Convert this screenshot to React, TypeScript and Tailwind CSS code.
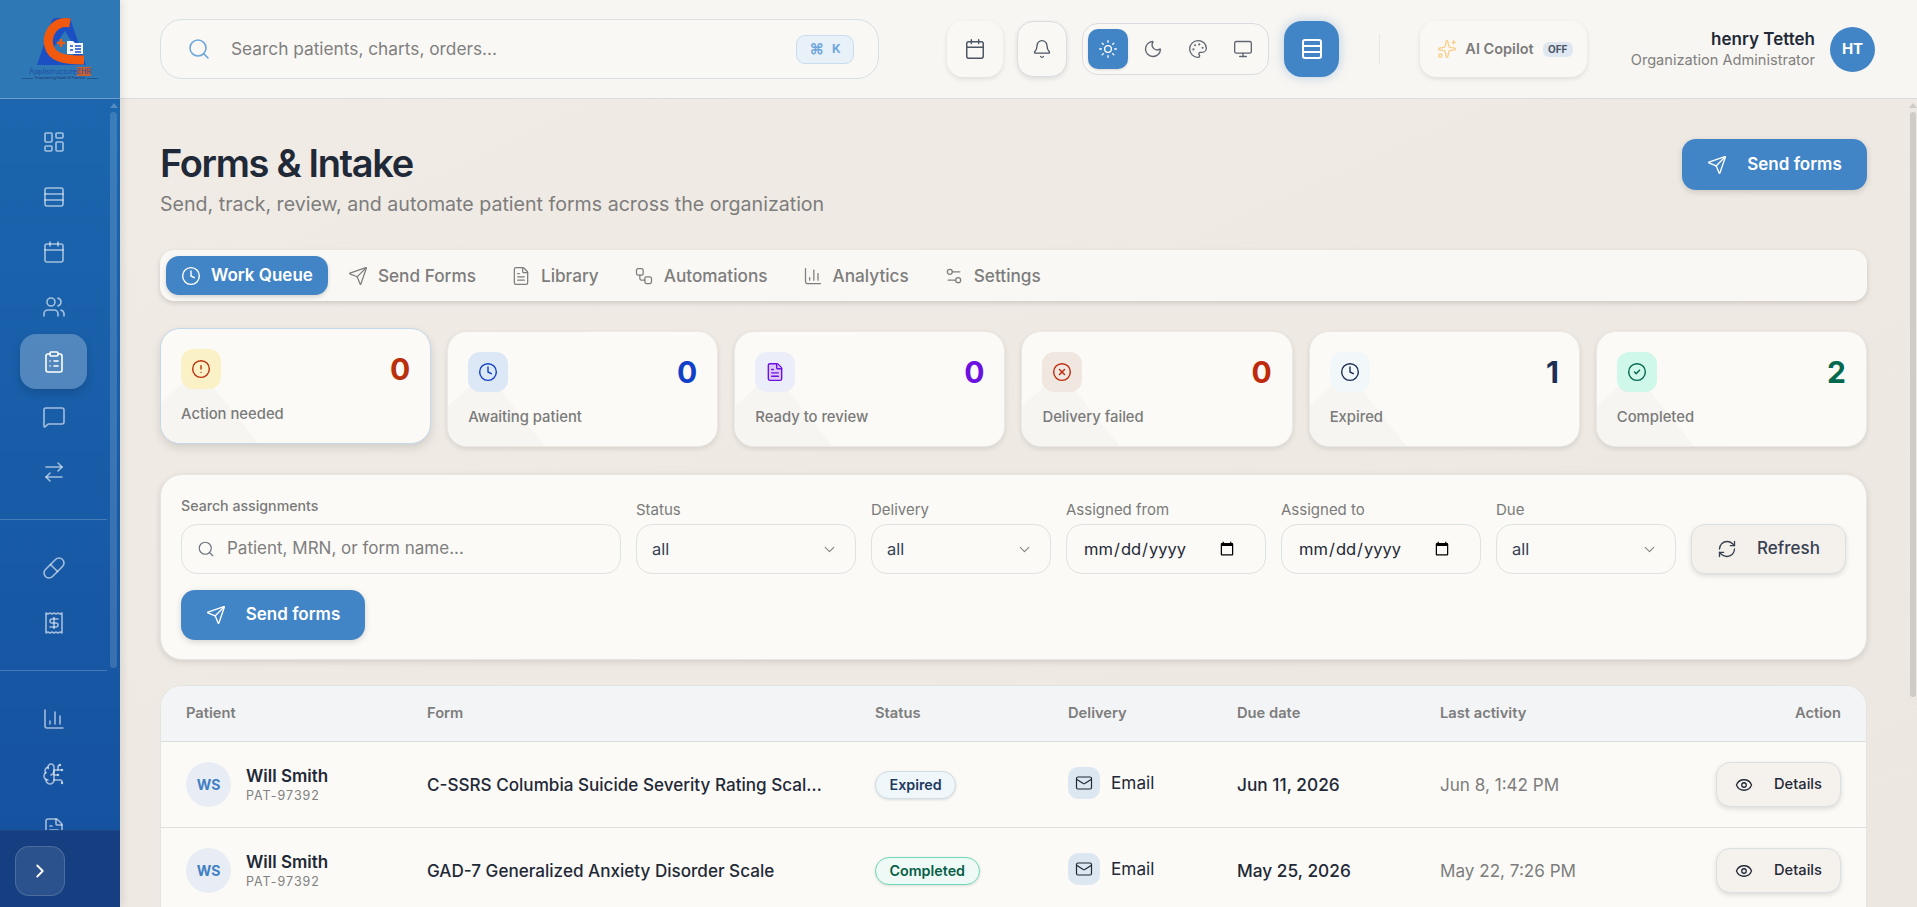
import {
  ArrowRightLeft,
  Bell,
  BrainCircuit,
  Calendar,
  ChartColumn,
  ChevronDown,
  ChevronRight,
  CircleAlert,
  CircleCheck,
  CircleX,
  ClipboardList,
  Clock,
  Eye,
  FileText,
  LayoutDashboard,
  Mail,
  MessageSquare,
  Monitor,
  Moon,
  Palette,
  Pill,
  Receipt,
  RefreshCw,
  Rows3,
  Search,
  Send,
  Settings2,
  Sparkles,
  Sun,
  Users,
  Workflow,
} from "lucide-react";
import type { ReactNode } from "react";

const navGroups = [
  [LayoutDashboard, Rows3, Calendar, Users, ClipboardList, MessageSquare, ArrowRightLeft],
  [Pill, Receipt],
  [ChartColumn, BrainCircuit, FileText],
];

const tabs = [
  { label: "Send Forms", icon: Send },
  { label: "Library", icon: FileText },
  { label: "Automations", icon: Workflow },
  { label: "Analytics", icon: ChartColumn },
  { label: "Settings", icon: Settings2 },
];

const stats = [
  { label: "Action needed", value: 0, icon: CircleAlert, box: "bg-[#fbf1c7]", tone: "text-[#b9300c]", lifted: true },
  { label: "Awaiting patient", value: 0, icon: Clock, box: "bg-[#dce8f5]", tone: "text-[#1140c8]" },
  { label: "Ready to review", value: 0, icon: FileText, box: "bg-[#ebeef8]", tone: "text-[#6d11e0]", fill: "fill-[#dcc8fa]" },
  { label: "Delivery failed", value: 0, icon: CircleX, box: "bg-[#efe7e0]", tone: "text-[#c02a0c]" },
  { label: "Expired", value: 1, icon: Clock, box: "bg-[#f2f7f9]", tone: "text-[#1e2f55]" },
  { label: "Completed", value: 2, icon: CircleCheck, box: "bg-[#cff7ea]", tone: "text-[#04684f]" },
];

const rows = [
  {
    form: "C-SSRS Columbia Suicide Severity Rating Scale (Adult)",
    status: "Expired",
    badge: "bg-[#f0f7fa] border-[#cfdde5] text-[#1e3a5f]",
    due: "Jun 11, 2026",
    activity: "Jun 8, 1:42 PM",
  },
  {
    form: "GAD-7 Generalized Anxiety Disorder Scale",
    status: "Completed",
    badge: "bg-[#effaf6] border-[#6ed9b8] text-[#065f46]",
    due: "May 25, 2026",
    activity: "May 22, 7:26 PM",
  },
];

const tableCols = "grid grid-cols-[241px_448px_193px_169px_203px_200px_1fr] items-center px-[25px]";

const Logo = () => (
  <div className="flex flex-col items-center">
    <svg width="64" height="50" viewBox="-4 0 64 50">
      <path d="M5 48 L20 3 Q21 1 24 1 L38 1 L54 48 Z" fill="#1d4fc4" />
      <path d="M22 30 L33 14 L44 32 L40 40 L26 40 Z" fill="#2f78b6" />
      <path d="M38 6 C22 3 14 18 17 29 C20 40 30 43 52 43" fill="none" stroke="#f1590f" strokeWidth="9" />
      <path d="M25 26 h8 M29 22 v8" stroke="#f1590f" strokeWidth="2.4" />
      <path d="M35 24 h6 l2 2 h8 v11 h-16 Z" fill="#f4f7fb" />
      <path d="M38 29 h3 M38 33 h3 M43 29 h6 M43 32 h6 M43 35 h6" stroke="#1d4fc4" strokeWidth="1.4" />
    </svg>
    <div className="font-['Inter',sans-serif] text-[7.2px] leading-[9px] text-[#1c4ea0] whitespace-nowrap">
      Applistructure<span className="bg-[#f1590f]/80 text-[#1c4ea0]">EHR</span>
    </div>
    <div className="flex items-center gap-[2px] text-[3.5px] leading-[5px] text-[#17336b] whitespace-nowrap font-['Inter',sans-serif]">
      <span className="w-[11px] h-px bg-[#17336b]/50" />
      Empowering Health &amp; Practice
      <span className="w-[11px] h-px bg-[#17336b]/50" />
    </div>
  </div>
);

const ScrollRail = ({ className, thumb, track }: { className: string; thumb: string; track: string }) => (
  <div className={`absolute flex flex-col items-center ${className}`}>
    <span className={`w-0 h-0 border-x-[4px] border-x-transparent border-b-[5px] ${track} mb-[4px]`} />
    <div className={`flex-1 w-full ${thumb}`} />
  </div>
);

const Sidebar = () => (
  <aside className="relative w-[120px] h-full shrink-0 flex flex-col bg-gradient-to-b from-[#1c69b0] to-[#15509e] shadow-[2px_0_8px_rgba(0,0,0,0.1)] z-10">
    <div className="h-[99px] shrink-0 flex items-center justify-center bg-[#2f78b6] border-b border-[#6c9dc9]">
      <Logo />
    </div>
    <nav className="flex-1 overflow-hidden pt-[15px] w-[107px]">
      {navGroups.map((group, i) => (
        <div key={i} className={i > 0 ? "mt-[20px] pt-[20px] border-t border-white/20" : ""}>
          {group.map((Icon, j) => {
            const active = i === 0 && j === 4;
            return (
              <div
                key={j}
                className={`mx-[20px] h-[55px] flex items-center justify-center rounded-[16px] ${
                  active ? "bg-white/25 text-white shadow-[0_4px_8px_rgba(0,0,0,0.15)]" : "text-white/60"
                }`}
              >
                <Icon size={24} strokeWidth={1.6} />
              </div>
            );
          })}
        </div>
      ))}
    </nav>
    <ScrollRail
      className="right-[3px] top-[103px] bottom-[239px] w-[7px]"
      thumb="rounded-full bg-white/15"
      track="border-b-white/25"
    />
    <div className="h-[77px] shrink-0 bg-[#153f80] border-t border-white/5 pl-[15px] pt-[15px]">
      <button className="w-[50px] h-[50px] rounded-[14px] bg-white/10 border border-white/15 flex items-center justify-center text-white">
        <ChevronRight size={22} strokeWidth={2} />
      </button>
    </div>
  </aside>
);

const HeaderTile = ({ children, className = "" }: { children: ReactNode; className?: string }) => (
  <button
    className={`h-[56px] rounded-[16px] bg-[#faf8f4] shadow-[0_2px_5px_rgba(0,0,0,0.1)] flex items-center justify-center text-[#4b5563] ${className}`}
  >
    {children}
  </button>
);

const Header = () => (
  <header className="h-[99px] shrink-0 flex items-center bg-[#f8f6f2] border-b border-[#d9dde0] pl-[40px] pr-[42px]">
    <div className="w-[719px] h-[60px] rounded-[22px] border border-[#d9dfe3] bg-[#faf8f4] flex items-center pl-[26px] pr-[24px]">
      <Search size={24} strokeWidth={1.6} className="text-[#6fa8dc]" />
      <span className="ml-[20px] flex-1 text-[17.3px] text-[#7f7f7f]">Search patients, charts, orders...</span>
      <kbd className="w-[58px] h-[29px] rounded-[9px] bg-[#e8f0f8] border border-[#c9ddf0] flex items-center justify-center gap-[8px] text-[15px] font-bold text-[#6ea6dc] font-['Inter',sans-serif]">
        <span>⌘</span>
        <span className="text-[12px]">K</span>
      </kbd>
    </div>
    <HeaderTile className="ml-[68px] w-[56px]">
      <Calendar size={22} strokeWidth={1.6} />
    </HeaderTile>
    <HeaderTile className="ml-[14px] w-[50px] border border-[#d9dde0]">
      <Bell size={20} strokeWidth={1.6} />
    </HeaderTile>
    <div className="ml-[15px] w-[187px] h-[52px] rounded-[16px] border border-[#d9dde0] bg-[#faf8f4] flex items-center gap-[5px] pl-[5px]">
      <span className="w-[40px] h-[40px] rounded-[10px] bg-[#4285c7] text-white flex items-center justify-center shadow-sm">
        <Sun size={20} strokeWidth={1.6} />
      </span>
      {[Moon, Palette, Monitor].map((Icon, i) => (
        <span key={i} className="w-[40px] h-[40px] flex items-center justify-center text-[#5f6671]">
          <Icon size={20} strokeWidth={1.6} />
        </span>
      ))}
    </div>
    <button className="ml-[15px] w-[55px] h-[56px] rounded-[18px] bg-[#4285c7] text-white flex items-center justify-center shadow-[0_0_12px_rgba(66,133,199,0.35)]">
      <Rows3 size={24} strokeWidth={2} />
    </button>
    <span className="ml-[40px] w-px h-[30px] bg-[#e6e6e3]" />
    <HeaderTile className="ml-[40px] w-[167px] pl-[3px]">
      <Sparkles size={20} strokeWidth={1.6} className="text-[#f7cf8b]" />
      <span className="ml-[8px] text-[14.5px] font-semibold text-[#7b7b7b] whitespace-nowrap">AI Copilot</span>
      <span className="ml-[9px] w-[30px] h-[15px] rounded-[6px] bg-[#dfe8f1] text-[10px] leading-[15px] font-bold text-[#4b5563]">
        OFF
      </span>
    </HeaderTile>
    <div className="flex-1 text-right whitespace-nowrap mr-[15px]">
      <div className="text-[17px] leading-[22px] font-semibold text-[#1f2937]">henry Tetteh</div>
      <div className="text-[14.6px] leading-[20px] text-[#7f7f7f]">Organization Administrator</div>
    </div>
    <div className="w-[45px] h-[45px] rounded-full bg-[#4285c7] text-white text-[15px] font-bold flex items-center justify-center">
      HT
    </div>
  </header>
);

const SendButton = ({ className = "" }: { className?: string }) => (
  <button
    className={`w-[185px] rounded-[14px] bg-[#4285c7] text-white text-[17px] font-semibold flex items-center justify-center gap-[20px] shadow-[0_2px_6px_rgba(0,0,0,0.15)] ${className}`}
  >
    <Send size={20} strokeWidth={1.6} />
    Send forms
  </button>
);

const StatCard = ({ stat }: { stat: (typeof stats)[number] }) => {
  const Icon = stat.icon;
  return (
    <div
      className={`relative overflow-hidden h-[116px] rounded-[20px] bg-[#fbfaf6] p-[20px] ${
        stat.lifted
          ? "-translate-y-[3px] border border-[#c3d8ea] shadow-[0_4px_10px_rgba(0,0,0,0.12)]"
          : "border border-[#ebe9e5] shadow-[0_2px_5px_rgba(0,0,0,0.1)]"
      }`}
    >
      <div className="absolute inset-0 bg-[#f6f5f1] [clip-path:polygon(14%_35%,36%_100%,0_100%,0_65%)]" />
      <div className="relative flex items-center justify-between">
        <span className={`w-[40px] h-[40px] rounded-[12px] flex items-center justify-center ${stat.box} ${stat.tone}`}>
          <Icon size={20} strokeWidth={1.7} className={stat.fill} />
        </span>
        <span className={`text-[30px] leading-[40px] font-bold ${stat.tone}`}>{stat.value}</span>
      </div>
      <div className="relative mt-[15px] text-[14.8px] leading-[20px] font-medium text-[#7a7a7a]">{stat.label}</div>
    </div>
  );
};

const fieldClass = "h-[50px] rounded-[16px] border border-[#dfe2e2] bg-[#fbfaf6] text-[16.5px]";

const Field = ({ label, width, children, tall }: { label: string; width: string; children: ReactNode; tall?: boolean }) => (
  <label className={`block ${width}`}>
    <div className={`leading-[20px] text-[#7a7a7a] ${tall ? "text-[14.2px] font-medium mb-[8px]" : "text-[15px] mb-[4px]"}`}>{label}</div>
    {children}
  </label>
);

const SelectBox = () => (
  <div className={`${fieldClass} flex items-center justify-between pl-[15px] pr-[17px] text-[#374151]`}>
    all
    <ChevronDown size={17} strokeWidth={1.5} className="text-[#808080]" />
  </div>
);

const DateBox = () => (
  <input type="date" className={`${fieldClass} w-full pl-[16px] pr-[28px] text-[#1f2937] outline-none`} />
);

const Filters = () => (
  <section className="rounded-[22px] border border-[#e6e5e1] bg-[#fbfaf6] shadow-[0_2px_6px_rgba(0,0,0,0.12)] px-[20px] pt-[21px] pb-[19px]">
    <div className="flex flex-wrap items-end gap-x-[15px] gap-y-[16px]">
      <Field label="Search assignments" width="w-[440px]" tall>
        <div className={`${fieldClass} flex items-center pl-[15px] text-[17px]`}>
          <Search size={18} strokeWidth={1.5} className="text-[#6b7280]" />
          <input
            placeholder="Patient, MRN, or form name..."
            className="ml-[12px] flex-1 bg-transparent outline-none placeholder:text-[#7f7f7f]"
          />
        </div>
      </Field>
      <Field label="Status" width="w-[220px]">
        <SelectBox />
      </Field>
      <Field label="Delivery" width="w-[180px]">
        <SelectBox />
      </Field>
      <Field label="Assigned from" width="w-[200px]">
        <DateBox />
      </Field>
      <Field label="Assigned to" width="w-[200px]">
        <DateBox />
      </Field>
      <Field label="Due" width="w-[180px]">
        <SelectBox />
      </Field>
      <button className="w-[155px] h-[50px] rounded-[14px] border border-[#dde0e0] bg-[#f4f0ec] text-[17px] font-medium text-[#374151] flex items-center justify-center gap-[20px] shadow-[0_2px_5px_rgba(0,0,0,0.12)]">
        <RefreshCw size={20} strokeWidth={1.6} />
        Refresh
      </button>
      <SendButton className="h-[50px] !w-[184px]" />
    </div>
  </section>
);

const Table = () => (
  <section className="rounded-t-[22px] border border-[#e3e4e2] bg-[#fbfaf6] overflow-hidden">
    <div className={`${tableCols} h-[56px] bg-[#f3f4f5] border-b border-[#d9dde0] text-[14.7px] font-semibold text-[#7d7d7d]`}>
      <span>Patient</span>
      <span>Form</span>
      <span>Status</span>
      <span>Delivery</span>
      <span>Due date</span>
      <span>Last activity</span>
      <span className="text-right">Action</span>
    </div>
    {rows.map((row) => (
      <div key={row.status} className={`${tableCols} h-[86px] border-b border-[#dfe1e1]`}>
        <div className="flex items-center gap-[15px]">
          <span className="w-[45px] h-[45px] rounded-full bg-[#e8edf5] text-[#3f80c4] text-[14px] font-bold flex items-center justify-center">
            WS
          </span>
          <div>
            <div className="text-[17px] leading-[22px] font-semibold text-[#1f2937]">Will Smith</div>
            <div className="text-[12.5px] leading-[18px] tracking-[0.08em] text-[#808080]">PAT-97392</div>
          </div>
        </div>
        <div className="w-[398px] truncate text-[17.1px] font-medium text-[#1f2937]">{row.form}</div>
        <div>
          <span className={`inline-block h-[28px] px-[13.5px] rounded-full border text-[14.3px] leading-[26px] font-semibold shadow-[0_1px_3px_rgba(0,0,0,0.12)] ${row.badge}`}>
            {row.status}
          </span>
        </div>
        <div className="flex items-center gap-[11px] text-[17.2px] text-[#1f2937] -mt-[4px]">
          <span className="w-[32px] h-[32px] rounded-[10px] bg-[#dde7f1] flex items-center justify-center">
            <Mail size={18} strokeWidth={1.6} />
          </span>
          Email
        </div>
        <span className="text-[17.3px] font-medium text-[#1f2937]">{row.due}</span>
        <span className="text-[17.1px] text-[#7d7d7d]">{row.activity}</span>
        <div className="flex justify-end">
          <button className="w-[125px] h-[45px] rounded-[14px] border border-[#dcdfe2] bg-[#f5f1ec] text-[14.7px] font-medium text-[#1f2937] flex items-center justify-center gap-[21px] shadow-[0_2px_5px_rgba(0,0,0,0.12)]">
            <Eye size={18} strokeWidth={1.7} />
            Details
          </button>
        </div>
      </div>
    ))}
  </section>
);

export default function App() {
  return (
    <div className="flex h-screen w-screen overflow-hidden bg-[#efe9e3] font-['Inter',sans-serif]">
      <Sidebar />
      <div className="relative flex-1 flex flex-col min-w-0">
        <Header />
        <main className="flex-1 overflow-hidden bg-gradient-to-br from-[#f0ebe5] to-[#ece7e1] pl-[40px] pr-[50px] pt-[40px]">
          <div className="flex items-start justify-between h-[80px] mb-[31px]">
            <div>
              <h1 className="text-[38px] leading-[48px] font-semibold tracking-[-0.035em] text-[#1f2937]">Forms &amp; Intake</h1>
              <p className="mt-[3px] text-[19.6px] leading-[29px] text-[#7d7d7d]">
                Send, track, review, and automate patient forms across the organization
              </p>
            </div>
            <SendButton className="h-[51px]" />
          </div>

          <div className="h-[51px] rounded-[14px] bg-[#faf8f4] shadow-[0_2px_5px_rgba(0,0,0,0.15)] flex items-center gap-[5px] px-[6px] mb-[30px]">
            <div className="h-[39px] rounded-[13px] bg-[#4285c7] text-white flex items-center gap-[10px] px-[15px] text-[17px] font-semibold shadow-[0_2px_4px_rgba(0,0,0,0.15)]">
              <Clock size={20} strokeWidth={1.7} />
              Work Queue
            </div>
            {tabs.map((tab) => (
              <div key={tab.label} className="h-[39px] pt-[1px] flex items-center gap-[10px] px-[15px] text-[17.2px] font-medium text-[#7d7d7d]">
                <tab.icon size={20} strokeWidth={1.5} />
                {tab.label}
              </div>
            ))}
          </div>

          <div className="grid grid-cols-6 gap-[16px] mb-[27px]">
            {stats.map((stat) => (
              <StatCard key={stat.label} stat={stat} />
            ))}
          </div>

          <div className="mb-[25px]">
            <Filters />
          </div>
          <Table />
        </main>
        <ScrollRail
          className="right-0 top-[103px] bottom-[210px] w-[10px] pl-[3px] pr-[1px]"
          thumb="rounded-full bg-[#cfcbc6]"
          track="border-b-[#cfcbc6]"
        />
      </div>
    </div>
  );
}
